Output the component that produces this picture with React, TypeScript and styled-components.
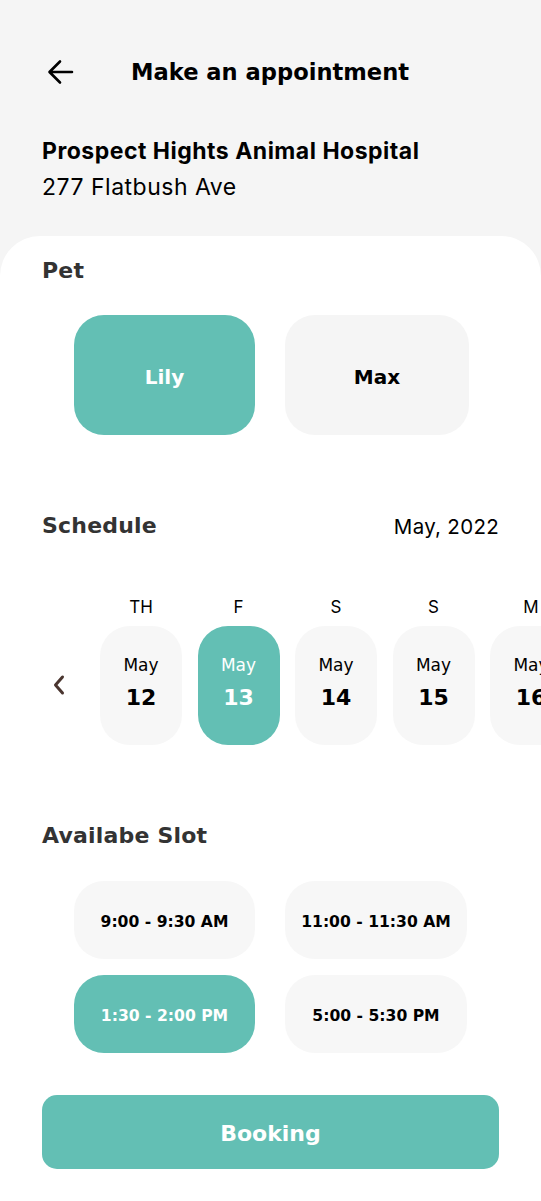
import React, { useState } from 'react';
import styled, { createGlobalStyle } from 'styled-components';

const TEAL = '#63bfb4';
const HEAD_FONT = '"DejaVu Sans", "Noto Sans", sans-serif';
const BODY_FONT = 'Inter, "Noto Sans", sans-serif';

const GlobalStyle = createGlobalStyle`
  html, body {
    margin: 0;
    padding: 0;
    background: #f5f5f5;
    overflow: hidden;
  }
  * {
    box-sizing: border-box;
  }
`;

type Day = { weekday: string; month: string; date: number };

const days: Day[] = [
  { weekday: 'TH', month: 'May', date: 12 },
  { weekday: 'F', month: 'May', date: 13 },
  { weekday: 'S', month: 'May', date: 14 },
  { weekday: 'S', month: 'May', date: 15 },
  { weekday: 'M', month: 'May', date: 16 },
];

const slots = ['9:00 - 9:30 AM', '11:00 - 11:30 AM', '1:30 - 2:00 PM', '5:00 - 5:30 PM'];

const App = () => {
  const [pet, setPet] = useState('Lily');
  const [day, setDay] = useState(13);
  const [slot, setSlot] = useState('1:30 - 2:00 PM');

  return (
    <Page>
      <GlobalStyle />
      <Header>
        <BackButton aria-label="Back">
          <svg width="28" height="26" viewBox="0 0 28 26" fill="none">
            <path
              d="M25 13H3M13 2.5L2.5 13L13 23.5"
              stroke="#000"
              strokeWidth="2.6"
              strokeLinecap="round"
              strokeLinejoin="round"
            />
          </svg>
        </BackButton>
        <Title>Make an appointment</Title>
      </Header>

      <Clinic>
        <ClinicName>Prospect Hights Animal Hospital</ClinicName>
        <ClinicAddress>277 Flatbush Ave</ClinicAddress>
      </Clinic>

      <Sheet>
        <SectionTitle>Pet</SectionTitle>
        <PetRow>
          {['Lily', 'Max'].map((name) => (
            <PetCard key={name} active={pet === name} onClick={() => setPet(name)}>
              {name}
            </PetCard>
          ))}
        </PetRow>

        <ScheduleHead>
          <SectionTitle>Schedule</SectionTitle>
          <MonthLabel>May, 2022</MonthLabel>
        </ScheduleHead>

        <DayStrip>
          <PrevButton aria-label="Previous">
            <svg width="14" height="22" viewBox="0 0 14 22" fill="none">
              <path
                d="M10.5 3L3.5 11L10.5 19"
                stroke="#4a352f"
                strokeWidth="3"
                strokeLinecap="round"
                strokeLinejoin="round"
              />
            </svg>
          </PrevButton>
          <DayList>
            {days.map((d) => (
              <DayColumn key={d.date}>
                <Weekday>{d.weekday}</Weekday>
                <DayCard active={day === d.date} onClick={() => setDay(d.date)}>
                  <DayMonth>{d.month}</DayMonth>
                  <DayNumber>{d.date}</DayNumber>
                </DayCard>
              </DayColumn>
            ))}
          </DayList>
        </DayStrip>

        <SlotTitle>Availabe Slot</SlotTitle>
        <SlotGrid>
          {slots.map((s) => (
            <SlotButton key={s} active={slot === s} onClick={() => setSlot(s)}>
              {s}
            </SlotButton>
          ))}
        </SlotGrid>

        <BookingButton>Booking</BookingButton>
      </Sheet>
    </Page>
  );
};

const Page = styled.div`
  width: 100%;
  min-height: 100vh;
  display: flex;
  flex-direction: column;
  background: #f5f5f5;
`;

const Header = styled.div`
  display: flex;
  align-items: center;
  height: 48px;
  margin-top: 48px;
  padding: 0 42px 0 47px;
`;

const BackButton = styled.button`
  display: flex;
  align-items: center;
  justify-content: center;
  width: 28px;
  height: 28px;
  padding: 0;
  border: none;
  background: none;
  cursor: pointer;
`;

const Title = styled.h1`
  margin: 0 0 0 56px;
  font-family: ${HEAD_FONT};
  font-weight: 700;
  font-size: 22.6px;
  color: #000;
`;

const Clinic = styled.div`
  display: flex;
  flex-direction: column;
  gap: 8px;
  margin-top: 41px;
  padding: 0 42px;
  font-family: ${BODY_FONT};
  color: #000;
`;

const ClinicName = styled.div`
  font-size: 23px;
  font-weight: 700;
  line-height: 28px;
  letter-spacing: 0.5px;
`;

const ClinicAddress = styled.div`
  font-size: 23px;
  font-weight: 400;
  line-height: 28px;
  letter-spacing: 0.5px;
`;

const Sheet = styled.div`
  flex: 1;
  margin-top: 35px;
  padding: 21px 42px 0;
  background: #fff;
  border-radius: 40px 40px 0 0;
  display: flex;
  flex-direction: column;
`;

const SectionTitle = styled.h2`
  margin: 0;
  font-family: ${HEAD_FONT};
  font-weight: 700;
  font-size: 22px;
  line-height: 28px;
  letter-spacing: 0.2px;
  color: #333;
`;

const PetRow = styled.div`
  display: grid;
  grid-template-columns: 181px 184px;
  gap: 30px;
  margin: 30px 0 0 32px;
`;

const PetCard = styled.button<{ active: boolean }>`
  height: 120px;
  padding: 3px 0 0;
  border: none;
  border-radius: 30px;
  background: ${({ active }) => (active ? TEAL : '#f5f5f5')};
  color: ${({ active }) => (active ? '#fff' : '#000')};
  font-family: ${HEAD_FONT};
  font-weight: 700;
  font-size: 20px;
  cursor: pointer;
`;

const ScheduleHead = styled.div`
  display: flex;
  align-items: center;
  justify-content: space-between;
  margin-top: 77px;
`;

const MonthLabel = styled.span`
  font-family: ${BODY_FONT};
  font-size: 20.5px;
  letter-spacing: 0.3px;
  color: #000;
`;

const DayStrip = styled.div`
  display: flex;
  align-items: flex-end;
  margin: 57px -42px 0 0;
  overflow: hidden;
`;

const PrevButton = styled.button`
  flex: none;
  width: 58px;
  height: 119px;
  padding: 0 0 2px 10px;
  display: flex;
  align-items: center;
  border: none;
  background: none;
  cursor: pointer;
`;

const DayList = styled.div`
  display: flex;
  gap: 15.5px;
`;

const DayColumn = styled.div`
  flex: none;
  width: 82px;
  display: flex;
  flex-direction: column;
  align-items: center;
  gap: 9px;
`;

const Weekday = styled.span`
  font-family: ${BODY_FONT};
  font-size: 17px;
  line-height: 20px;
  color: #000;
`;

const DayCard = styled.button<{ active: boolean }>`
  width: 82px;
  height: 119px;
  padding: 0 0 4px;
  border: none;
  border-radius: 30px;
  display: flex;
  flex-direction: column;
  align-items: center;
  justify-content: center;
  gap: 5px;
  background: ${({ active }) => (active ? TEAL : '#f7f7f7')};
  color: ${({ active }) => (active ? '#fff' : '#000')};
  font-family: ${HEAD_FONT};
  cursor: pointer;
`;

const DayMonth = styled.span`
  font-size: 17px;
  font-weight: 400;
  line-height: 24px;
`;

const DayNumber = styled.span`
  font-size: 22px;
  font-weight: 700;
  line-height: 32px;
`;

const SlotTitle = styled(SectionTitle)`
  margin-top: 77px;
`;

const SlotGrid = styled.div`
  display: grid;
  grid-template-columns: 181px 182px;
  grid-auto-rows: 78px;
  gap: 16px 30px;
  margin: 31px 0 0 32px;
`;

const SlotButton = styled.button<{ active: boolean }>`
  padding: 3px 0 0;
  border: none;
  border-radius: 30px;
  background: ${({ active }) => (active ? TEAL : '#f7f7f7')};
  color: ${({ active }) => (active ? '#fff' : '#000')};
  font-family: ${HEAD_FONT};
  font-weight: 700;
  font-size: 15.6px;
  cursor: pointer;
`;

const BookingButton = styled.button`
  margin-top: 42px;
  height: 74px;
  width: 100%;
  padding: 2px 0 0;
  border: none;
  border-radius: 15px;
  background: ${TEAL};
  color: #fff;
  font-family: ${HEAD_FONT};
  font-weight: 700;
  font-size: 22px;
  cursor: pointer;
`;

export default App;
